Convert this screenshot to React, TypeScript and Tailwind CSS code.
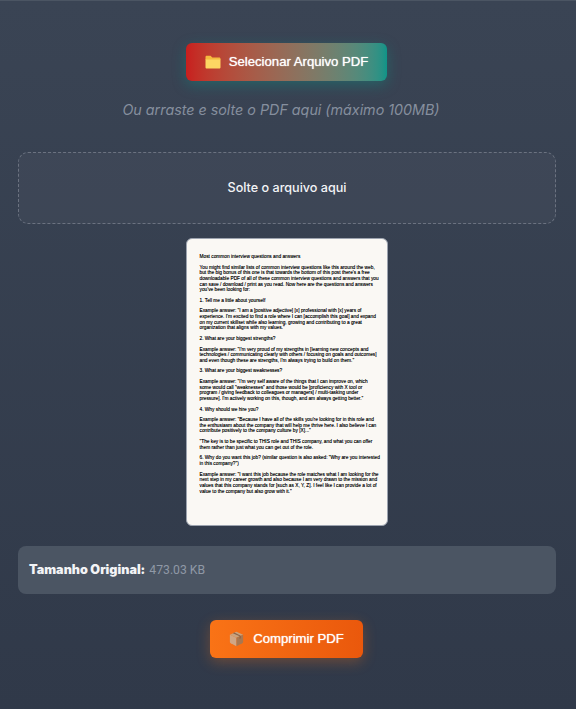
const docText = [
  ["Most common interview questions and answers"],
  [
    "You might find similar lists of common interview questions like this around the web,",
    "but the big bonus of this one is that towards the bottom of this post there's a free",
    "downloadable PDF of all of these common interview questions and answers that you",
    "can save / download / print as you read. Now here are the questions and answers",
    "you've been looking for:",
  ],
  ["1. Tell me a little about yourself"],
  [
    "Example answer: \"I am a [positive adjective] [x] professional with [x] years of",
    "experience. I'm excited to find a role where I can [accomplish this goal] and expand",
    "on my current skillset while also learning, growing and contributing to a great",
    "organization that aligns with my values.\"",
  ],
  ["2. What are your biggest strengths?"],
  [
    "Example answer: \"I'm very proud of my strengths in [learning new concepts and",
    "technologies / communicating clearly with others / focusing on goals and outcomes]",
    "and even though these are strengths, I'm always trying to build on them.\"",
  ],
  ["3. What are your biggest weaknesses?"],
  [
    "Example answer: \"I'm very self aware of the things that I can improve on, which",
    "some would call \"weaknesses\" and those would be [proficiency with X tool or",
    "program / giving feedback to colleagues or managers] / multi-tasking under",
    "pressure]. I'm actively working on this, though, and am always getting better.\"",
  ],
  ["4. Why should we hire you?"],
  [
    "Example answer: \"Because I have all of the skills you're looking for in this role and",
    "the enthusiasm about the company that will help me thrive here. I also believe I can",
    "contribute positively to the company culture by [X]...\"",
  ],
  [
    "\"The key is to be specific to THIS role and THIS company, and what you can offer",
    "them rather than just what you can get out of the role.",
  ],
  [
    "6. Why do you want this job? (similar question is also asked: \"Why are you interested",
    "in this company?\")",
  ],
  [
    "Example answer: \"I want this job because the role matches what I am looking for the",
    "next step in my career growth and also because I am very drawn to the mission and",
    "values that this company stands for [such as X, Y, Z]. I feel like I can provide a lot of",
    "value to the company but also grow with it.\"",
  ],
];

function FolderIcon() {
  return (
    <svg width="16" height="14" viewBox="0 0 16 14" className="shrink-0">
      <path d="M0.5 2.2C0.5 1.3 1.1 0.8 1.9 0.8H5.6L7.3 2.4H14.2C15 2.4 15.5 3 15.5 3.7V5H0.5Z" fill="#f5b93f" />
      <path d="M0.5 4.6H15.5V12.2C15.5 13 15 13.5 14.2 13.5H1.8C1 13.5 0.5 13 0.5 12.2Z" fill="#fdd663" />
    </svg>
  );
}

function BoxIcon() {
  return (
    <svg width="15" height="16" viewBox="0 0 14 15" className="shrink-0">
      <path d="M7 0.6L13.2 3.4L7 6.4L0.8 3.4Z" fill="#c9a27c" />
      <path d="M0.8 3.4L7 6.4V14.4L1.6 11.6C1.1 11.3 0.8 10.9 0.8 10.4Z" fill="#d0a684" />
      <path d="M13.2 3.4L7 6.4V14.4L12.4 11.6C12.9 11.3 13.2 10.9 13.2 10.4Z" fill="#a9774f" />
      <path d="M3.6 2.1L9.9 5L9.9 7.4L11 6.8V4.4L4.9 1.5Z" fill="#8a6248" />
    </svg>
  );
}

export default function App() {
  return (
    <div className="flex min-h-[709px] flex-col items-center bg-gradient-to-b from-[#3a4454] to-[#303949] border-t border-[#4b5563] pl-[18px] pr-[20px] font-['Inter',sans-serif]">
      <button className="mt-[42px] mr-[1px] flex h-[38px] w-[201px] items-center justify-center gap-2 rounded-md bg-gradient-to-r from-[#c81e1e] to-[#0d9488] font-['Liberation_Sans',sans-serif] text-[13.15px] text-white [text-shadow:0_0_1px_rgba(255,255,255,0.9)] shadow-[0_4px_14px_rgba(13,148,136,0.4)]">
        <FolderIcon />
        <span>Selecionar Arquivo PDF</span>
      </button>

      <p className="mt-[17px] mr-[12px] font-['Inter',sans-serif] text-[14.3px] leading-6 italic text-[#868f9e]">
        Ou arraste e solte o PDF aqui (máximo 100MB)
      </p>

      <div className="mt-[30px] flex h-[72px] w-full items-center justify-center rounded-[10px] border border-dashed border-[#6b7280] bg-white/[0.03]">
        <span className="text-[12.6px] font-medium text-[#f3f4f6]">Solte o arquivo aqui</span>
      </div>

      <div className="mt-[14px] mr-[1px] h-[288px] w-[202px] overflow-hidden rounded-md border border-[#9ca3af] bg-[#faf8f4] pl-[13px] pt-[15px] font-['Liberation_Sans',sans-serif] text-[4.8px] leading-[5.67px] whitespace-nowrap text-black [text-shadow:0_0_0.4px_rgba(0,0,0,0.7)]">
        {docText.map((lines) => (
          <p key={lines[0]} className="mb-[4.9px]">
            {lines.map((l) => (
              <span key={l} className="block">{l}</span>
            ))}
          </p>
        ))}
      </div>

      <div className="mt-[20px] flex h-[48px] w-full items-center rounded-lg bg-[#4b5563] px-[11px] text-[12.6px]">
        <span className="font-black text-[#f3f4f6]">Tamanho Original:</span>
        <span className="ml-1 font-['Roboto',sans-serif] text-[12.2px] text-[#8f98a6]">473.03 KB</span>
      </div>

      <button className="mt-[26px] mr-[1px] flex h-[38px] w-[153px] items-center justify-center gap-[9px] rounded-md bg-gradient-to-r from-[#f97316] to-[#ea580c] font-['Liberation_Sans',sans-serif] text-[13.15px] text-white [text-shadow:0_0_1px_rgba(255,255,255,0.9)] shadow-[0_4px_14px_rgba(249,115,22,0.3)]">
        <BoxIcon />
        <span>Comprimir PDF</span>
      </button>
    </div>
  );
}
